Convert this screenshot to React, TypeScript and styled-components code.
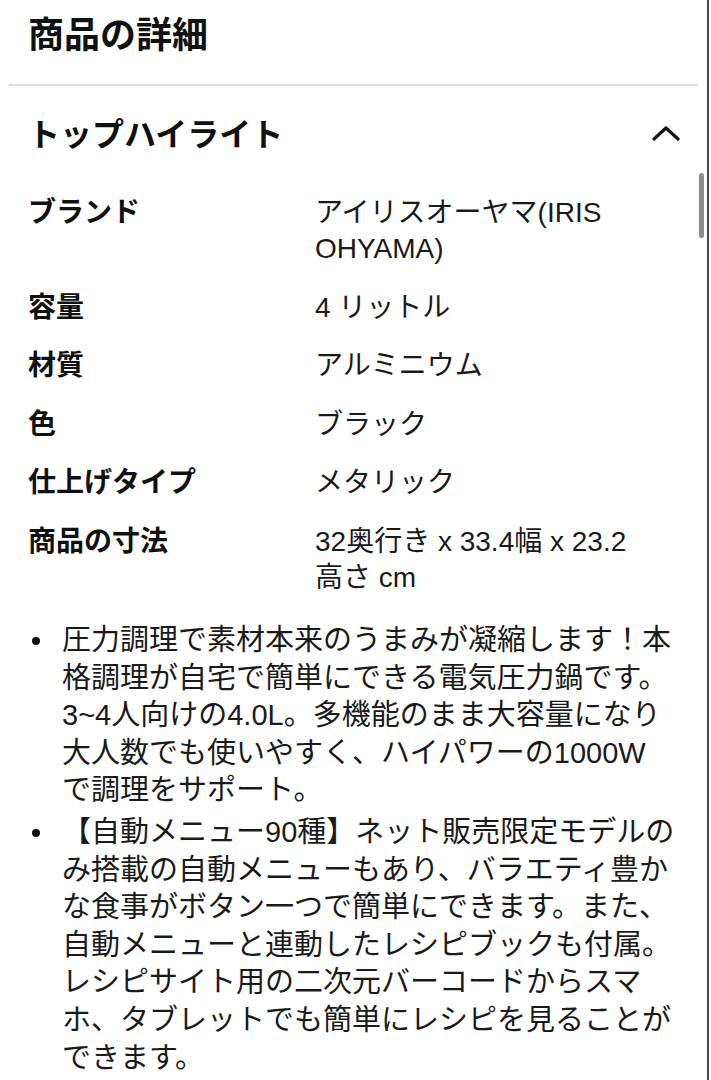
import React from 'react'
import styled, { createGlobalStyle } from 'styled-components'

const GlobalStyle = createGlobalStyle`
  html, body {
    margin: 0;
    padding: 0;
    background: #ffffff;
    overflow: hidden;
    height: 1080px;
  }
  body {
    font-family: 'Liberation Sans', 'Noto Sans CJK JP', sans-serif;
    color: #0f1111;
  }
`

interface Spec {
  label: string
  value: string
}

const specs: Spec[] = [
  { label: 'ブランド', value: 'アイリスオーヤマ(IRIS OHYAMA)' },
  { label: '容量', value: '4 リットル' },
  { label: '材質', value: 'アルミニウム' },
  { label: '色', value: 'ブラック' },
  { label: '仕上げタイプ', value: 'メタリック' },
  { label: '商品の寸法', value: '32奥行き x 33.4幅 x 23.2 高さ cm' },
]

// each bullet is kept as its visual lines
const bullets: string[][] = [
  [
    '圧力調理で素材本来のうまみが凝縮します！本',
    '格調理が自宅で簡単にできる電気圧力鍋です。',
    '3~4人向けの4.0L。多機能のまま大容量になり',
    '大人数でも使いやすく、ハイパワーの1000W',
    'で調理をサポート。',
  ],
  [
    '【自動メニュー90種】ネット販売限定モデルの',
    'み搭載の自動メニューもあり、バラエティ豊か',
    'な食事がボタン一つで簡単にできます。また、',
    '自動メニューと連動したレシピブックも付属。',
    'レシピサイト用の二次元バーコードからスマ',
    'ホ、タブレットでも簡単にレシピを見ることが',
    'できます。',
  ],
  [
    '【無水調理・低温調理】素材の水分を活かした',
    '無水調理や低温調理もできます。',
  ],
]

const ProductDetails: React.FC = () => {
  return (
    <Page>
      <Header>
        <Title>商品の詳細</Title>
      </Header>
      <Divider />
      <Section>
        <SectionHeader>
          <SectionTitle>トップハイライト</SectionTitle>
          <Chevron viewBox="0 0 30 16" aria-hidden="true">
            <polyline points="3,14 15,3 27,14" />
          </Chevron>
        </SectionHeader>
        <ScrollThumb />
        <SpecTable>
          {specs.map((s) => (
            <SpecRow key={s.label}>
              <SpecLabel>{s.label}</SpecLabel>
              <SpecValue>{s.value}</SpecValue>
            </SpecRow>
          ))}
        </SpecTable>
        <BulletList>
          {bullets.map((lines, i) => (
            <Bullet key={i}>
              {lines.map((line, j) => (
                <React.Fragment key={j}>
                  {line}
                  {j < lines.length - 1 ? <br /> : null}
                </React.Fragment>
              ))}
            </Bullet>
          ))}
        </BulletList>
      </Section>
    </Page>
  )
}

const Page = styled.div`
  width: 709px;
  height: 1080px;
  overflow: hidden;
  border-right: 2px solid #4a4a4a;
  box-sizing: border-box;
`

const Header = styled.div`
  padding: 12px 28px 24px;
`

const Title = styled.h1`
  margin: 0;
  font-size: 36px;
  line-height: 48px;
  font-weight: 700;
`

const Divider = styled.hr`
  margin: 0 9px;
  border: none;
  border-top: 2px solid #dddddd;
`

const Section = styled.div`
  position: relative;
  padding: 0 0 0 28px;
`

const SectionHeader = styled.div`
  display: flex;
  align-items: center;
  justify-content: space-between;
  padding: 28px 26px 0 0;
  height: 42px;
`

const SectionTitle = styled.h2`
  margin: 0;
  font-size: 32px;
  line-height: 42px;
  font-weight: 700;
`

const Chevron = styled.svg`
  width: 30px;
  height: 16px;
  fill: none;
  stroke: #111111;
  stroke-width: 3.2;
  stroke-linecap: round;
  stroke-linejoin: round;
  margin-top: -4px;
`

const ScrollThumb = styled.div`
  position: absolute;
  right: 3px;
  top: 87px;
  width: 5px;
  height: 65px;
  border-radius: 3px;
  background: #8c8c8c;
`

const SpecTable = styled.div`
  margin-top: 28px;
  padding-right: 44px;
`

const SpecRow = styled.div`
  display: grid;
  grid-template-columns: 287px 1fr;
  padding: 11px 0 11.5px;
`

const SpecLabel = styled.div`
  font-size: 28px;
  line-height: 36px;
  font-weight: 700;
`

const SpecValue = styled.div`
  font-size: 28px;
  line-height: 36px;
  font-weight: 400;
  color: #1a1a1a;
  word-break: keep-all;
`

const BulletList = styled.ul`
  list-style: none;
  margin: 15px 0 0;
  padding: 0 8px 0 34px;
`

const Bullet = styled.li`
  position: relative;
  font-size: 29px;
  line-height: 37.6px;
  margin-bottom: 4px;
  color: #1a1a1a;
  white-space: nowrap;
  &::before {
    content: '';
    position: absolute;
    left: -30px;
    top: 15px;
    width: 8px;
    height: 8px;
    border-radius: 50%;
    background: #111111;
  }
`

export default function App() {
  return (
    <>
      <GlobalStyle />
      <ProductDetails />
    </>
  )
}
